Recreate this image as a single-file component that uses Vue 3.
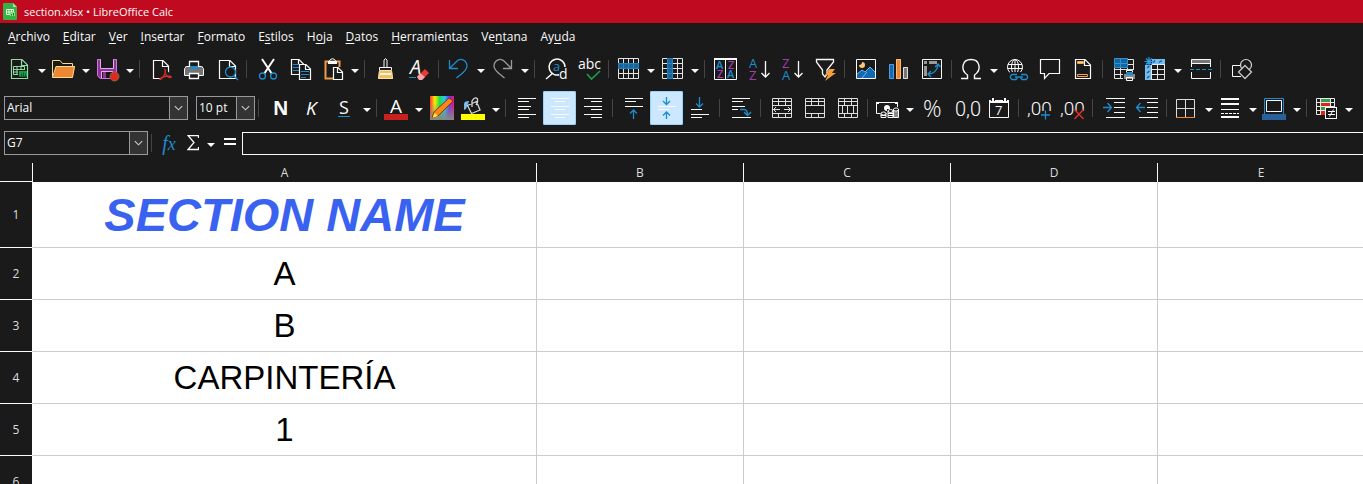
<script setup>
import { ref } from 'vue'

const W = '#fafafa'
const B = '#1e8bcd'
const P = '#a23fb0'
const s = (d, c = W, w = 1, x = '') => `<path d="${d}" fill="none" stroke="${c}" stroke-width="${w}" ${x}/>`
const f = (d, c = W) => `<path d="${d}" fill="${c}"/>`
const t = (x, y, size, str, c = W, x2 = '') =>
  `<text x="${x}" y="${y}" font-size="${size}" fill="${c}" font-family="Open Sans, Noto Sans, sans-serif" ${x2}>${str}</text>`
const digits = (x, y, size, str) =>
  `<text x="${x}" y="${y}" font-size="${size}" fill="${W}" font-family="Liberation Sans Narrow, Roboto, sans-serif" font-weight="300">${str}</text>`
const page = (x, y, w, h, c = W, k = 6) =>
  s(`M${x + 0.5} ${y + 0.5}H${x + w - k}L${x + w - 0.5} ${y + k}V${y + h - 0.5}H${x + 0.5}ZM${x + w - k - 0.5} ${y + 0.5}V${y + k + 0.5}H${x + w - 0.5}`, c, 1.2)
const lines = (list) => list.map(([x, y, w]) => `<rect x="${x}" y="${y}" width="${w}" height="1" fill="${W}"/>`).join('')
const down = (x, y1, y2, c, a = 4) => s(`M${x + 0.5} ${y1}V${y2}M${x + 0.5 - a} ${y2 - a}L${x + 0.5} ${y2}L${x + 0.5 + a} ${y2 - a}`, c, 1.3)
const up = (x, y1, y2, c, a = 4) => s(`M${x + 0.5} ${y2}V${y1}M${x + 0.5 - a} ${y1 + a}L${x + 0.5} ${y1}L${x + 0.5 + a} ${y1 + a}`, c, 1.3)
const tableGrid = 'M6.5 6.5H26.5V26.5H6.5ZM6.5 11.5H26.5M6.5 16.5H26.5M6.5 21.5H26.5M11.5 6.5V26.5M16.5 6.5V26.5M21.5 6.5V26.5'
const mergeBase = 'M8.5 7.5H27.5V26.5H8.5ZM8.5 10.5H27.5M8.5 14.5H27.5M8.5 22.5H27.5M14.5 7.5V14.5M21.5 7.5V14.5'

const icons = {
  new: page(8, 7, 17, 20, '#92d9a3') + s('M10.5 14.5H21.5V22.5H10.5ZM10.5 17.5H21.5M10.5 20H21.5M14 14.5V22.5M18 14.5V22.5', '#92d9a3') +
    f('M15 18H24V25H15Z', '#1a1a1a') + f('M16 19H24V24.5H16Z', '#169b45') + s('M18.5 24V21.5M20.5 24V20.5M22.5 24V22', '#0a5a25'),
  open: s('M5.5 25.500V8.500H13L15.500 11.500H25.500V14', '#f8db8f') + f('M9 14H28L25.500 25.500H6Z', '#ed8733') + s('M9 14.500H27.500L25.500 25.500H5.500Z', '#f8db8f'),
  save: f('M6 7H26V27H9L6 24Z', '#92319c') + s('M6.5 7.500H25.500V26.500H9.500L6.500 23.500Z', '#c879d0') + f('M10 7H22V16H10Z', '#1a1a1a') +
    s('M9.5 7.500V16.500H22.500V7.500', '#e0b0e5') + f('M11 20H22V26H11Z', '#1a1a1a') + s('M10.500 26V19.500H21.500V26', '#e0b0e5') + f('M12 20H15V26H12Z', '#92319c') +
    '<circle cx="23.500" cy="24.500" r="4.500" fill="#e0281b" stroke="#8a6355"/>',
  pdf: page(10, 8, 16, 19) + f('M17 17H23L28 23V28H17Z', '#1a1a1a') + s('M22 17.500C23.500 20 20.500 25 17.500 27.500C16 28 17 25.500 22 24.500C26 23.500 29 24.500 28 25.500C26 26.500 21 22 22 17.500Z', '#d0302b', 1.3),
  print: s('M13.500 15V9.500H22.500V15', W, 1.3) + f('M9 14H27V24H9Z', '#747474') + s('M8.500 23.500V16.500L10.500 14.500H25.500L27.500 16.500V23.500Z') + f('M14 14H22V17H14Z', B) +
    f('M13 21H23V27H13Z', '#1a1a1a') + s('M13.500 21.500H22.500V26.500H13.500Z', W, 1.3),
  preview: page(10, 8, 17, 19) + '<circle cx="21.500" cy="20" r="5" fill="#1a1a1a" stroke="#1e8bcd" stroke-width="1.300"/>' + s('M25 24L29 28', B, 1.5),
  cut: s('M12 7L22 22M24 7L14 22', W, 2) + '<g fill="none" stroke="#1e8bcd" stroke-width="1.300"><circle cx="12.500" cy="24" r="3"/><circle cx="23.500" cy="24" r="3"/></g>',
  copy: page(8, 7, 13, 16, W, 5) + s('M10 12.500H16M10 15.500H16M10 18.500H16', B) + f('M16 12H28V28H16Z', '#1a1a1a') + page(16, 12, 12, 16, W, 5) + s('M18 19.500H26M18 22.500H26M18 25.500H23', B),
  paste: s('M17 26.500H9.500V9.500H23.500V16', '#ef9b48', 2) + f('M12 9H21V12H12Z', W) + s('M13.500 11V8.500Q16.500 5 19.500 8.500V11') + f('M17 15H28V28H17Z', '#1a1a1a') + page(17, 15, 10, 13, W, 5),
  clone: s('M16 16V8Q17.500 5 19 8V16') + s('M11.500 18V15.500H23.500V18') + f('M11 19H24L25 27H10Z', '#f0bf6a') + s('M11.500 18.500H23.500L24.500 26.500H10.500Z', '#f9e0a6') + f('M12 21H23V23H12Z', '#fff6da'),
  clear: t(9, 22, 20, 'A', W, 'font-style="italic"') + f('M8 25H15V26H8Z', B) + f('M24 17L28 21L21 28L16 25Z', '#e63b35') + f('M19 21L24 25L21 28H18L16 25Z', '#f7a8a6'),
  undo: s('M7.500 8V16.500H16M8 16L15 9C19 5 25 9 25 14C25 19 20 21 14.500 26', B, 1.3),
  redo: s('M25.500 8V16.500H17M25 16L18 9C14 5 8 9 8 14C8 19 13 21 18.500 26', '#9a9a9a', 1.3),
  find: s('M23 22A8 8 0 1 1 27 15M15 21L8 27', W, 1.5) + t(15, 19, 13, 'a', B) + f('M21 17H29V28H21Z', '#1a1a1a') + t(21, 27, 14, 'd'),
  spell: t(7, 17, 14, 'abc') + s('M16 22L20.500 27L29 19', '#1aa04c', 1.6),
  rows: s(tableGrid, '#e4e4e4') + f('M6 11H27V17H6Z', '#17659b') + s('M6.500 11.500H26.500V16.500H6.500ZM11.500 11.500V16.500M16.500 11.500V16.500M21.500 11.500V16.500', '#2482bf'),
  cols: s(tableGrid, '#e4e4e4') + f('M11 6H17V27H11Z', '#17659b') + s('M11.500 6.500H16.500V26.500H11.500ZM11.500 11.500H16.500M11.500 16.500H16.500M11.500 21.500H16.500', '#2482bf'),
  sort: s('M6.500 6.500V27.500H28.500V6.500', W, 1) + f('M6 6H29V8H6Z') + f('M17 8H18V28H17Z') + t(8, 17, 11, 'A', B, 'font-weight="600"') + t(20, 17, 11, 'Z', P, 'font-weight="600"') + t(9, 26, 11, 'Z', P, 'font-weight="600"') + t(19, 26, 11, 'A', B, 'font-weight="600"'),
  az: t(8, 16, 13, 'A', B) + t(8, 28, 13, 'Z', P) + down(24, 9, 25, W),
  za: t(8, 16, 13, 'Z', P) + t(8, 28, 13, 'A', B) + down(24, 9, 25, W),
  filter: s('M9.500 7.500H26.500V10L20 18V22L18 25L15.500 22V18L9.500 10Z', W, 1.3) + f('M22 17H28L25 21H29L18 29L21 23H18Z', '#f29e3d'),
  image: s('M8.500 7.500H27.500V26.500H8.500Z') + f('M9 26V22L14 18L17 20L22 15L27 20V26Z', '#1168b3') + s('M9 22L14 18L17 20L22 15L27 20M14 26L19 20', '#74b4e8') + f('M14 10A3 3 0 1 1 11 13A3 3 0 0 0 14 10Z', '#f8c97b'),
  chart: f('M8 12H13V27H8Z', '#1768b3') + s('M8.500 12.500H12.500V26.500H8.500Z', '#4e9fdf') + f('M15 7H20V27H15Z', '#ed8733') + s('M15.500 7.500H19.500V26.500H15.500Z', '#f5bc76') + f('M22 15H27V27H22Z', '#777') + s('M22.500 15.500H26.500V26.500H22.500Z', '#ddd'),
  pivot: s('M8.500 7.500H27.500V26.500H8.500Z') + f('M10 9H13V12H10ZM15 9H23V12H15ZM10 14H13V24H10Z', '#999') + s('M14 22C20 22 23 19 24 13M21 15L24 12L26.500 15M17 19L14 22L17 25', B, 1.4),
  omega: s('M6 26.500H12.500V23C5 18 7 7.500 16 7.500S27 18 19.500 23V26.500H26', W, 1.4),
  link: '<g fill="none" stroke="#fafafa"><circle cx="16" cy="15" r="7.500"/><ellipse cx="16" cy="15" rx="3.500" ry="7.500"/></g>' + s('M9 12.500H23M8.500 16.500H23.500M16 7V22') + f('M11 20H29V29H11Z', '#1a1a1a') +
    s('M18 22.500H13L11.500 24V26L13 27.500H17L18.500 26M22 22.500H27L28.500 24V26L27 27.500H23L21.500 26M16 25H24', B, 1.3),
  comment: s('M8.500 7.500H27.500V21.500H17L12.500 26.500V21.500H8.500Z', W, 1.2),
  header: page(10, 7, 16, 20) + s('M12.500 9.500H18.500V11.500H12.500ZM12.500 22.500H22.500V24.500H12.500Z', '#f3a352') + f('M13 10H18V11H13Z', '#f8d48c'),
  printarea: s('M8.500 7.500H27.500V26.500H8.500ZM8.500 12.500H27.500M8.500 17.500H27.500M8.500 22.500H27.500M14.500 7V27M21.500 7V27', '#e4e4e4') + f('M8 6H22V16H8Z', '#17659b') + s('M8.500 6.500H21.500V15.500H8.500ZM8 11.500H22M14.500 6V16', '#2e93d6') +
    f('M17 18H29V29H17Z', '#1a1a1a') + s('M20.500 22V18.500H26.500V22') + f('M18 22H29V27H18Z', '#8a8a8a') + f('M20 20H27V23H20Z', B) + s('M20.500 25.500H26.500V28.500H20.500Z'),
  freeze: s('M6.500 7.500H25.500V27.500H6.500ZM12 12.500H25.500M12 17.500H25.500M12 22.500H25.500M12.500 12V27.500M18.500 12V27.500', '#e8e8e8') + f('M12 7H26V12H12ZM6 12H12V28H6Z', '#74bcf0') +
    s('M14 10.500L16 8.500M20 10.500L23 8.500M8 16L10.500 14M8 21L10.500 19M8 26L10.500 24', '#145f96', 1.5) + f('M6 6H13V13H6Z', '#1a1a1a') + s('M10 5V14M5.500 9.500H14.500M7 6.500L13 12.500M13 6.500L7 12.500', '#2e9be6', 1.2),
  split: f('M8 7H28V11H8Z', '#777') + s('M8.500 15V7.500H27.500V15M8.500 11.500H27.500M8.500 20V26.500H27.500V20') + s('M7 17.500H29', B, 1, 'stroke-dasharray="4 2"'),
  shapes: s('M16 13.500H8.500V24.500H17') + '<circle cx="22" cy="13" r="5.500" fill="none" stroke="#d8d8d8" stroke-width="1.200"/>' + `<path d="M21 13.500L27.500 20L21 26.500L14.500 20Z" fill="#1a1a1a" stroke="#c8c8c8" stroke-width="1.300"/>`,

  bold: t(11, 24, 19, 'N', W, 'font-weight="700"'),
  italic: t(11, 24, 19, 'K', W, 'font-style="italic"'),
  underline: t(11, 23, 18, 'S') + f('M10 25H22V26H10Z', B),
  color: t(10, 22, 19, 'A') + f('M4 23H28V29H4Z', '#c9211e'),
  pencil: '<defs><linearGradient id="hue"><stop offset="0" stop-color="#f33"/><stop offset=".2" stop-color="#fe0"/><stop offset=".4" stop-color="#2d4"/><stop offset=".6" stop-color="#2ce"/><stop offset=".8" stop-color="#63e"/><stop offset="1" stop-color="#e17"/></linearGradient><linearGradient id="fade" x2="0" y2="1"><stop offset=".3" stop-color="#888" stop-opacity="0"/><stop offset="1" stop-color="#888"/></linearGradient></defs><rect x="6" y="5" width="24" height="24" fill="url(#hue)"/><rect x="6" y="5" width="24" height="24" fill="url(#fade)"/>' +
    `<path d="M8 27L10 21L25 7L29 10L14 25Z" fill="#ff8616" stroke="#7b3e08"/>` + f('M8.500 27L10.500 22L14 25Z', '#fff04a'),
  fill: f('M7 19V13Q7 10 12 10L11 13L9 18Z', '#74bcf0') + s('M10.500 14.500L19.500 10.500L23 19L14.500 22.500ZM15 16V10Q18 5 20.500 8Q21 12 19 14', '#d8d8d8', 1.3) + f('M4 23H28V29H4Z', '#ff0'),
  left: lines([[9, 7, 18], [9, 10, 11], [9, 15, 13], [9, 18, 11], [9, 23, 18], [9, 26, 11]]),
  center: lines([[9, 7, 18], [13, 10, 10], [9, 15, 18], [13, 18, 10], [9, 23, 18], [13, 26, 10]]),
  right: lines([[9, 7, 18], [16, 10, 11], [9, 15, 18], [16, 18, 11], [9, 23, 18], [16, 26, 11]]),
  top: lines([[9, 7, 18], [9, 10, 11], [9, 15, 18]]) + up(17, 19, 28, B, 3.5),
  middle: lines([[9, 15, 18], [9, 18, 11]]) + down(17, 6, 13.500, B, 3.5) + up(17, 21, 28, B, 3.5),
  bottom: lines([[9, 18, 11], [9, 23, 18], [9, 26, 11]]) + down(17, 6, 16, B, 3.5),
  wrap: lines([[9, 7, 18], [9, 10, 11], [9, 15, 13], [9, 18, 6], [9, 26, 19]]) + s('M17 18.500H21Q24.500 18.500 24.500 24M21 21L24.500 24.500L28 21', B, 1.4),
  mergecenter: s(mergeBase + 'M14.500 22.500V26.500M21.500 22.500V26.500', '#dedede') + s('M9 18.500H16M20 18.500H27M12 16L9.500 18.500L12 21M24 16L26.500 18.500L24 21', '#dedede'),
  merge: s(mergeBase + 'M14.500 22.500V26.500M21.500 22.500V26.500', '#dedede'),
  unmerge: s(mergeBase + 'M14.500 22.500V26.500M21.500 22.500V26.500M12.500 14.500V22.500M17.500 14.500V22.500M23.500 14.500V22.500', '#dedede'),
  currency: s('M9 22.500H5.500V11.500H26.500V17') + '<circle cx="16" cy="17" r="3" fill="#fafafa"/>' + f('M5 11H8V13H5ZM24 11H27V13H24Z') + f('M10 20H16V18H21V16H28V28H10Z', '#1a1a1a') +
    '<g fill="none" stroke="#fafafa"><ellipse cx="12.500" cy="22.500" rx="2.500" ry="1.500"/><ellipse cx="19.500" cy="20" rx="2.500" ry="1.500"/><ellipse cx="25" cy="18.500" rx="2.500" ry="1.500"/></g>' + s('M10 22V26.500H15V22M10 24.500H15M17 20V26.500H22V20M17 22.500H22M17 24.500H22M22.500 18V26.500H27.500V18M22.500 21H27.500M22.500 23H27.500M22.500 25H27.500'),
  percent: t(8, 26, 23, '%', W, 'font-weight="300"'),
  number: digits(7, 25, 20, '0,0'),
  date: s('M8.500 9.500H27.500V26.500H8.500Z') + f('M8 9H28V12H8Z') + f('M10 6H14V10H10ZM22 6H26V10H22Z', '#1a1a1a') + f('M11 7H13V10H11ZM23 7H25V10H23Z') + t(14, 24, 13, '7'),
  adddec: digits(5, 24, 19, ',00') + f('M20 20H29V29H20Z', '#1a1a1a') + s('M23.500 19.500V28.500M19 24H28', B, 1.3),
  deldec: digits(5, 24, 19, ',00') + f('M20 20H29V29H20Z', '#1a1a1a') + s('M19.500 18.500L28.500 28M28.500 18.500L19.500 28', '#e0322d', 1.4),
  indent: lines([[10, 7, 19], [18, 11, 11], [18, 16, 11], [18, 21, 11], [10, 26, 19]]) + s('M7 16.500H15.500M11.500 12L15.500 16.500L11.500 21', B, 1.3),
  outdent: lines([[10, 7, 19], [18, 11, 11], [18, 16, 11], [18, 21, 11], [10, 26, 19]]) + s('M16 16.500H7.500M11.500 12L7.500 16.500L11.500 21', B, 1.3),
  borders: s('M6.500 26V8.500H24.500V26M15.500 8V26M6 17.500H25', '#dcdcdc') + f('M6 26H25V27H6Z', '#ed8733'),
  lines: f('M7 7H25V9H7ZM7 12H25V14H7ZM7 18H25V19H7ZM7 25H25V27H7Z') + s('M7 22.500H25', W, 1, 'stroke-dasharray="3 1"'),
  linecolor: s('M6.500 23V7.500H25.500V23', B) + s('M8.500 9.500H23.500V20.500H8.500Z') + f('M4 23H28V29H4Z', '#2a6099'),
  conditional: s('M6.500 7.500H24.500V23.500H6.500ZM6.500 11.500H24.500M6.500 15.500H24.500M6.500 19.500H24.500M10.500 7V24M20.500 7V24', '#e8e8e8') + f('M11 8H20V11H11Z', '#2fa04d') + f('M11 12H20V15H11ZM11 20H15V24H11Z', '#e0241b') + f('M11 16H20V19H11Z', '#2fa04d') +
    '<rect x="15.500" y="16.500" width="11" height="11" fill="#1a1a1a" stroke="#fafafa"/>' + s('M18 20.500H25M18 23.500H25M23.500 18.500L19.500 25.500'),
}

const b = (id, label, more = false, on = false) => ({ id, label, more, on })
const standard = [
  b('new', 'Nuevo', true), b('open', 'Abrir', true), b('save', 'Guardar', true), null,
  b('pdf', 'Exportar a PDF'), b('print', 'Imprimir'), b('preview', 'Previsualizar'), null,
  b('cut', 'Cortar'), b('copy', 'Copiar'), b('paste', 'Pegar', true), null,
  b('clone', 'Clonar formato'), b('clear', 'Limpiar formato'), null,
  b('undo', 'Deshacer', true), b('redo', 'Rehacer', true), null,
  b('find', 'Buscar y reemplazar'), b('spell', 'Ortografía'), null,
  b('rows', 'Fila', true), b('cols', 'Columna', true), null,
  b('sort', 'Ordenar'), b('az', 'Orden ascendente'), b('za', 'Orden descendente'), b('filter', 'Filtro automático'), null,
  b('image', 'Imagen'), b('chart', 'Gráfico'), b('pivot', 'Tabla dinámica'), null,
  b('omega', 'Símbolo', true), b('link', 'Hiperenlace'), b('comment', 'Comentario'), b('header', 'Cabeceras y pies'), null,
  b('printarea', 'Área de impresión'), b('freeze', 'Inmovilizar', true), b('split', 'Dividir ventana'), null,
  b('shapes', 'Funciones de dibujo'),
]
const formatting = [
  null, b('bold', 'Negrita'), b('italic', 'Cursiva'), b('underline', 'Subrayado', true), null,
  b('color', 'Color de letra', true), b('pencil', 'Selector de color'), b('fill', 'Color de fondo', true), null,
  b('left', 'Alinear a la izquierda'), b('center', 'Centrar', false, true), b('right', 'Alinear a la derecha'), null,
  b('top', 'Alinear arriba'), b('middle', 'Centrar verticalmente', false, true), b('bottom', 'Alinear abajo'), null,
  b('wrap', 'Ajustar texto'), null,
  b('mergecenter', 'Combinar y centrar'), b('merge', 'Combinar celdas'), b('unmerge', 'Dividir celdas'), null,
  b('currency', 'Moneda', true), b('percent', 'Porcentaje'), b('number', 'Número'), b('date', 'Fecha'), null,
  b('adddec', 'Añadir decimal'), b('deldec', 'Eliminar decimal'), null,
  b('indent', 'Aumentar sangría'), b('outdent', 'Reducir sangría'), null,
  b('borders', 'Bordes', true), b('lines', 'Estilo de borde', true), b('linecolor', 'Color de borde', true), null,
  b('conditional', 'Formato condicional', true),
]

// Each entry: text before the access key, the key itself, text after it
const menus = [
  ['', 'A', 'rchivo'], ['', 'E', 'ditar'], ['', 'V', 'er'], ['', 'I', 'nsertar'], ['', 'F', 'ormato'],
  ['E', 's', 'tilos'], ['H', 'o', 'ja'], ['', 'D', 'atos'], ['', 'H', 'erramientas'], ['Ve', 'n', 'tana'], ['Ay', 'u', 'da'],
]
const columns = ['A', 'B', 'C', 'D', 'E']
const rows = ['SECTION NAME', 'A', 'B', 'CARPINTERÍA', '1', '']

const cell = ref('G7')
const formula = ref('')
</script>

<template>
  <div class="app">
    <header class="title">
      <svg width="14" height="17" viewBox="0 0 14 17" aria-hidden="true">
        <path d="M1 0H10L14 4V16Q14 17 13 17H1Q0 17 0 16V1Q0 0 1 0Z" fill="#34b543" />
        <path d="M10 0L14 4H10Z" fill="#a4e6a0" />
        <path d="M3.500 6.500H10.500V11.500H3.500ZM3.500 9H10.500M6 6.500V11.500M8.500 6.500V11.500" fill="none" stroke="#e6ffe6" />
        <path d="M7 9H12V13H7Z" fill="#8ddc7f" />
        <path d="M8.500 12.500V11M10.500 12.500V10" stroke="#1c7c2c" />
      </svg>
      <span>section.xlsx • LibreOffice Calc</span>
    </header>

    <nav class="menu">
      <button v-for="m in menus" :key="m.join('')" type="button">{{ m[0] }}<u>{{ m[1] }}</u>{{ m[2] }}</button>
    </nav>

    <div class="bar" role="toolbar" aria-label="Estándar">
      <template v-for="(item, i) in standard" :key="i">
        <span v-if="!item" class="sep"></span>
        <template v-else>
          <button type="button" class="tool" :aria-label="item.label"><svg viewBox="1 0 33 34" v-html="icons[item.id]"></svg></button>
          <button v-if="item.more" type="button" class="more" :aria-label="item.label + ': opciones'"></button>
        </template>
      </template>
    </div>

    <div class="bar format" role="toolbar" aria-label="Formato">
      <span class="combo font">
        <select aria-label="Nombre de letra"><option>Arial</option></select>
        <svg viewBox="0 0 18 24" aria-hidden="true"><path d="M5 10L9 14L13 10" /></svg>
      </span>
      <span class="combo size">
        <select aria-label="Tamaño de letra"><option>10 pt</option></select>
        <svg viewBox="0 0 18 24" aria-hidden="true"><path d="M5 10L9 14L13 10" /></svg>
      </span>
      <template v-for="(item, i) in formatting" :key="i">
        <span v-if="!item" class="sep"></span>
        <template v-else>
          <button type="button" class="tool" :class="{ on: item.on }" :aria-label="item.label" :aria-pressed="item.on"><svg viewBox="1 0 33 34" v-html="icons[item.id]"></svg></button>
          <button v-if="item.more" type="button" class="more" :aria-label="item.label + ': opciones'"></button>
        </template>
      </template>
    </div>

    <div class="formula">
      <span class="combo name">
        <input v-model="cell" aria-label="Cuadro de nombre" />
        <svg viewBox="0 0 18 24" aria-hidden="true"><path d="M5 10L9 14L13 10" /></svg>
      </span>
      <span class="sep"></span>
      <button type="button" class="fx" aria-label="Asistente de funciones"><i>f</i><i class="x">x</i></button>
      <button type="button" class="sum" aria-label="Seleccionar función">
        <svg width="12" height="16" viewBox="0 0 12 16"><path d="M11.500 3V.500H1L7 7.500L1 14.500H11.500V12" fill="none" stroke="#fafafa" stroke-width="1.300" /></svg>
      </button>
      <button type="button" class="more" aria-label="Más funciones"></button>
      <button type="button" class="equal" aria-label="Fórmula">
        <svg width="12" height="10" viewBox="0 0 12 10"><path d="M0 0H12V2H0ZM0 5H12V7H0Z" fill="#fafafa" /></svg>
      </button>
      <input v-model="formula" class="line" aria-label="Línea de entrada" />
    </div>

    <main class="sheet">
      <table>
        <colgroup><col class="c-head" /><col class="c-wide" /><col v-for="n in 4" :key="n" class="c-std" /></colgroup>
        <thead>
          <tr><td class="corner"></td><th v-for="c in columns" :key="c" scope="col">{{ c }}</th></tr>
        </thead>
        <tbody>
          <tr v-for="(r, i) in rows" :key="i" :class="{ first: i === 0 }">
            <th scope="row">{{ i + 1 }}</th>
            <td>{{ r }}</td>
            <td v-for="n in 4" :key="n"></td>
          </tr>
        </tbody>
      </table>
    </main>
  </div>
</template>

<style>
body { margin: 0; background: #1a1a1a; }
</style>

<style scoped>
.app {
  display: flex;
  flex-direction: column;
  height: 100vh;
  overflow: hidden;
  background: #1a1a1a;
  color: #fafafa;
  font: 12px/16px "Open Sans", "Noto Sans", sans-serif;
}
button, input, select { font: inherit; color: inherit; background: none; border: 0; padding: 0; margin: 0; border-radius: 0; outline: 0; }
.title { display: flex; align-items: center; gap: 7px; height: 23px; padding-left: 3px; background: #c00a20; font-size: 11px; flex: none; }
.menu { display: flex; gap: 13px; height: 28px; padding-left: 8px; flex: none; align-items: center; white-space: nowrap; }
.menu u { text-underline-offset: 2px; }
.bar { display: flex; align-items: center; height: 34px; padding: 1px 0 4px 4px; flex: none; }
.tool { width: 33px; height: 34px; flex: none; }
.tool svg { display: block; width: 33px; height: 34px; }
.tool.on { background: #cce8ff; box-shadow: inset 0 0 0 1px #99d1ff; border-radius: 2px; }
.more { display: flex; align-items: center; padding-left: 1px; box-sizing: border-box; width: 11px; height: 34px; flex: none; }
.more::before { content: ""; border: 4px solid transparent; border-top-color: #fafafa; border-bottom: 0; margin-top: 4px; }
.sep { width: 8px; height: 18px; flex: none; background: linear-gradient(#444, #444) 3px 0 / 1px 100% no-repeat; }
.combo { display: flex; box-sizing: border-box; height: 24px; border: 1px solid #999; flex: none; }
.combo select, .combo input { appearance: none; flex: 1; min-width: 0; padding-left: 2px; }
.combo svg { width: 17px; height: 22px; flex: none; background: #333; border-left: 1px solid #999; pointer-events: none; }
.combo path { fill: none; stroke: #ccc; stroke-width: 1.200; }
.font { width: 184px; margin-right: 8px; }
.size { width: 59px; }
.name { width: 144px; }
.formula { display: flex; align-items: center; height: 24px; padding: 2px 0 8px 4px; flex: none; }
.formula .more { width: 14px; height: 24px; padding-left: 3px; }
.fx { width: 26px; color: #1e8bcd; font: 20px/24px "Liberation Serif", serif; }
.fx .x { font-size: 18px; }
.sum, .equal { display: flex; align-items: center; justify-content: center; height: 24px; }
.sum { width: 22px; }
.equal { width: 24px; }
.line { flex: 1; min-width: 0; box-sizing: border-box; height: 23px; border: 1px solid #fafafa; border-right: 0; padding: 0 4px; }
.sheet { flex: 1; min-height: 0; overflow: hidden; }
table { width: 100%; min-width: 1364px; table-layout: fixed; border-collapse: separate; border-spacing: 0; }
.c-head { width: 32px; }
.c-wide { width: 504px; }
td, th { padding: 0; box-sizing: border-box; }
th { background: #1a1a1a; color: #ddd; font-weight: 400; text-align: center; }
thead th { height: 18px; border-left: 1px solid #fafafa; }
.corner { height: 19px; border-bottom: 1px solid #fafafa; }
tbody th, tbody td { height: 52px; }
tbody th { border-bottom: 1px solid #fafafa; }
tbody td { background: #fff; color: #000; border-bottom: 1px solid #ccc; border-left: 1px solid #ccc; text-align: center; font: 33px/40px "Liberation Sans", Arial, sans-serif; }
tbody td:nth-child(2) { border-left-color: #fff; }
.first th, .first td { height: 66px; }
.first td { color: #3a62f0; font: italic bold 47px/56px "Liberation Sans", Arial, sans-serif; }
</style>
